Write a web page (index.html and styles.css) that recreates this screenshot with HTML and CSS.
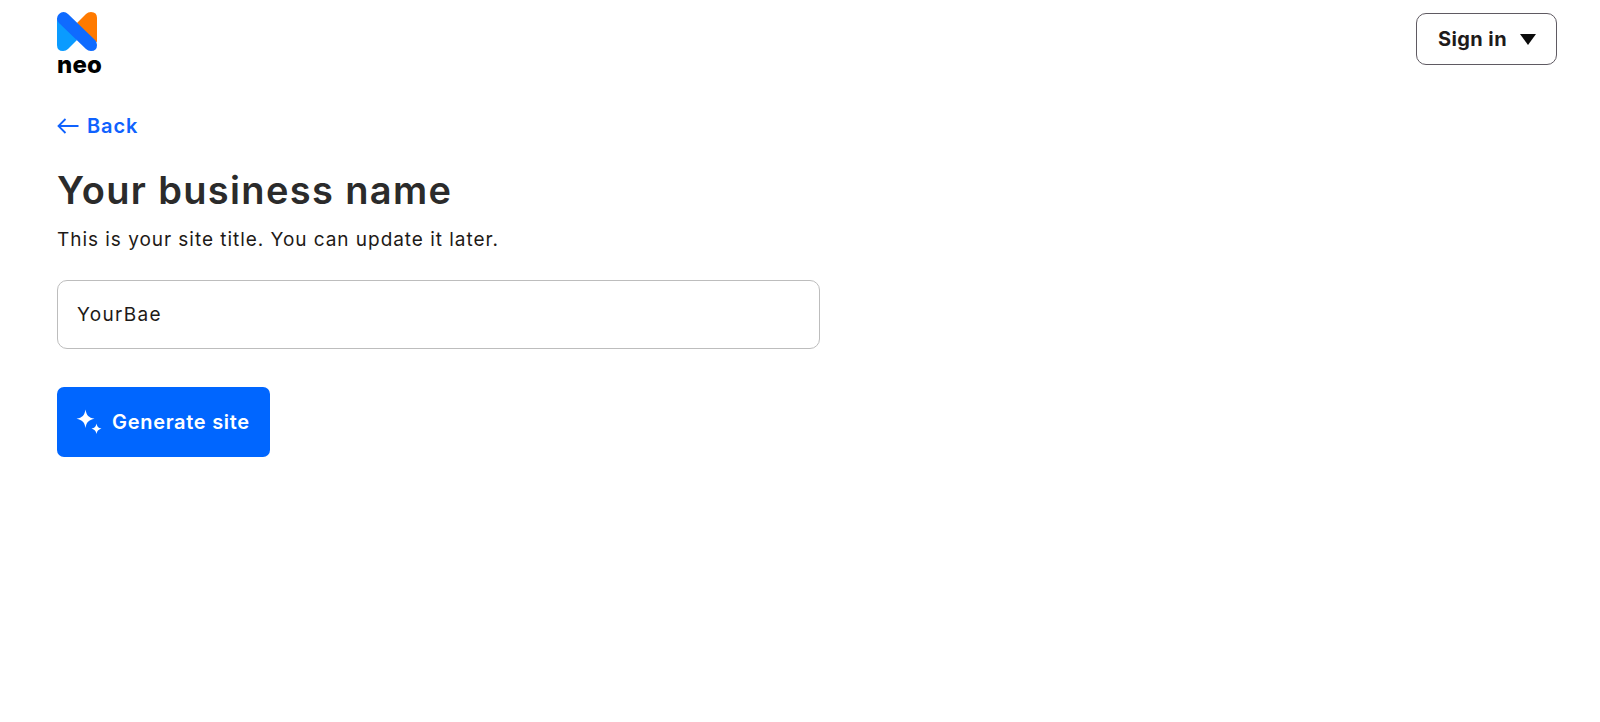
FILE: index.html
```html
<!DOCTYPE html>
<html lang="en">
<head>
<meta charset="utf-8">
<title>Your business name</title>
<link rel="stylesheet" href="styles.css">
</head>
<body>
<header class="topbar">
  <div class="brand">
    <svg class="brand-mark" width="40" height="39" viewBox="0 0 40 39" aria-hidden="true">
      <path d="M40 6 Q40 0 34 0 Q31 0 29 2 L20 11 L28 27 L40 30 Z" fill="#ff7a00"/>
      <path d="M0 6 L0 33 Q0 39 6 39 Q9 39 11 37 L20 28 L10 12 Z" fill="#0a9bff"/>
      <path d="M2 2 Q4 0 6.500 0 Q9 0 11 2 L38 28 Q40 30 40 33 Q40 39 34 39 Q31 39 29 37 L2 11 Q0 9 0 6.500 Q0 4 2 2 Z" fill="#0f6bff"/>
    </svg>
    <span class="brand-name">neo</span>
  </div>
  <button class="signin" type="button">
    <span>Sign in</span>
    <svg width="16" height="11" viewBox="0 0 16 11" aria-hidden="true"><path d="M0 0H16L8 11Z" fill="#0b0b0b"/></svg>
  </button>
</header>
<main class="content">
  <a class="back" href="#">
    <svg width="22" height="16" viewBox="0 0 22 16" aria-hidden="true"><path d="M21.500 8H1.500M8.500 1 1.500 8l7 7" fill="none" stroke="#0f62fe" stroke-width="1.800"/></svg>
    <span>Back</span>
  </a>
  <h1 class="title">Your business name</h1>
  <p class="subtitle">This is your site title. You can update it later.</p>
  <div class="field">YourBae</div>
  <button class="generate" type="button">
    <svg width="26" height="26" viewBox="0 0 26 26" aria-hidden="true">
      <path d="M9.500 0.500 C10.500 6.500 12.500 8.500 18.500 9.800 C12.500 11.100 10.500 13.100 9.500 19 C8.500 13.100 6.500 11.100 0.500 9.800 C6.500 8.500 8.500 6.500 9.500 0.500 Z" fill="#fff"/>
      <path d="M20.500 14.500 C21.100 17.700 22.200 18.800 25.500 19.700 C22.200 20.600 21.100 21.700 20.500 25 C19.900 21.700 18.800 20.600 15.500 19.700 C18.800 18.800 19.900 17.700 20.500 14.500 Z" fill="#fff"/>
    </svg>
    <span>Generate site</span>
  </button>
</main>
</body>
</html>
```
FILE: styles.css
```css
* { box-sizing: border-box; }
html, body { margin: 0; height: 100%; background: #fff; }
body { font-family: Inter, "Open Sans", sans-serif; color: #1e1a17; overflow: hidden; }

.topbar {
  display: flex;
  justify-content: space-between;
  align-items: flex-start;
  padding: 12px 43px 0 57px;
}
.brand { display: flex; flex-direction: column; width: 46px; }
.brand-mark { display: block; }
.brand-name {
  font-size: 24px;
  font-weight: 800;
  line-height: 20px;
  margin-top: 4px;
  color: #000;
  letter-spacing: 0.2px;
}
.signin {
  display: flex;
  align-items: center;
  justify-content: space-between;
  width: 141px;
  height: 52px;
  margin-top: 1px;
  padding: 0 20px 0 21px;
  background: #fff;
  border: 1px solid #5f5a62;
  border-radius: 10px;
  font: 700 20px Inter, sans-serif;
  letter-spacing: 0.4px;
  color: #1f1b1a;
}

.content { display: flex; flex-direction: column; align-items: flex-start; padding: 0 57px; }
.back {
  display: flex;
  align-items: center;
  gap: 8px;
  margin-top: 38px;
  height: 26px;
  font-size: 20px;
  font-weight: 600;
  color: #0f62fe;
  text-decoration: none;
  letter-spacing: 0.9px;
}
.title {
  margin: 26px 0 0;
  font-size: 38px;
  line-height: 50px;
  font-weight: 600;
  color: #2b2b2b;
  letter-spacing: 1.350px;
}
.subtitle {
  margin: 11px 0 0;
  font-size: 19px;
  line-height: 28px;
  font-weight: 400;
  letter-spacing: 0.960px;
}
.field {
  display: flex;
  align-items: center;
  width: 763px;
  height: 69px;
  margin-top: 26px;
  padding: 0 19px;
  border: 1px solid #bdbdbd;
  border-radius: 10px;
  font-size: 19px;
  letter-spacing: 1.300px;
}
.generate {
  display: flex;
  align-items: center;
  gap: 10px;
  width: 213px;
  height: 70px;
  margin-top: 38px;
  padding: 0 19px;
  background: #0066ff;
  border: 0;
  border-radius: 7px;
  color: #fff;
  font: 600 20px Inter, sans-serif;
  letter-spacing: 0.7px;
  white-space: nowrap;
}
```
